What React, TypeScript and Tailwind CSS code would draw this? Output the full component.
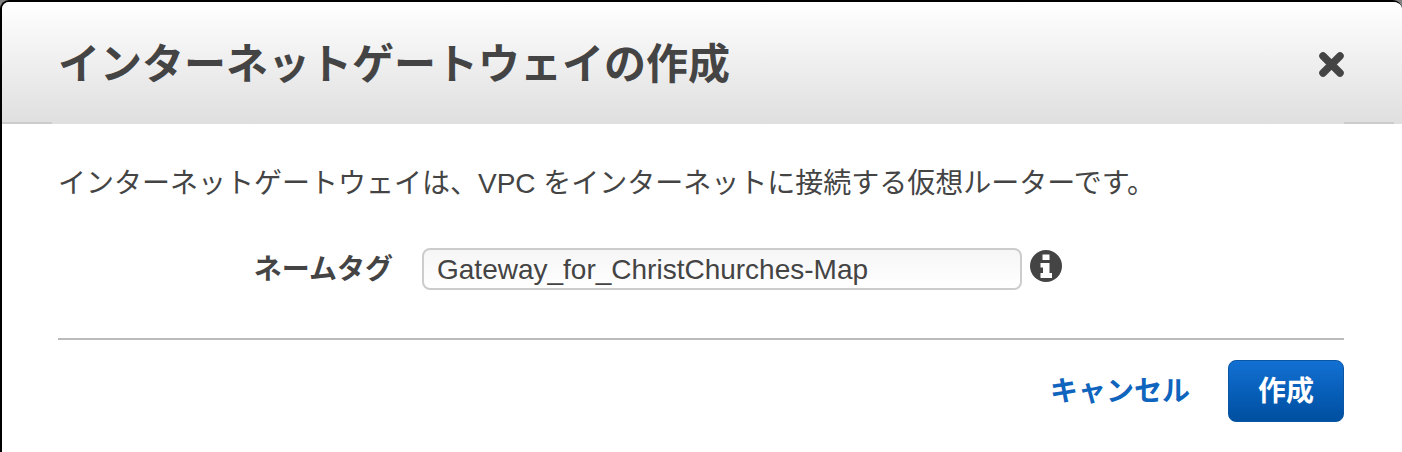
const jp = "font-['Liberation_Sans','Noto_Sans_CJK_JP',sans-serif]";

export default function App() {
  return (
    <div className={`w-[1402px] h-[452px] overflow-hidden bg-[#808080] ${jp}`}>
      <div className="h-full bg-white border-t-2 border-l-2 border-black rounded-tl-[9px] rounded-tr-[9px] overflow-hidden">
        {/* Header */}
        <div className="relative h-[122px] flex items-center justify-between pl-[56px] pr-[58px] bg-gradient-to-b from-white to-[#dfdfdf]">
          <h1 className="text-[42px] leading-[50px] font-bold text-[#444] mt-[4px]">
            インターネットゲートウェイの作成
          </h1>
          <svg viewBox="0 0 25 25" className="w-[25px] h-[25px] mt-[2px]">
            <path d="M4 4l17 17M21 4L4 21" stroke="#444" strokeWidth="7.5" strokeLinecap="round" fill="none" />
          </svg>
          <div className="absolute left-0 bottom-0 w-[50px] h-[2px] bg-[#ccc]" />
          <div className="absolute right-[8px] bottom-0 w-[50px] h-[2px] bg-[#ccc]" />
        </div>

        {/* Body */}
        <div className="pl-[56px] pr-[56px]">
          <p className="mt-[42px] text-[28px] leading-[36px] text-[#444]">
            インターネットゲートウェイは、VPC をインターネットに接続する仮想ルーターです。
          </p>
          <div className="mt-[46px] flex items-center">
            <label className="w-[335px] pt-[2px] text-right text-[28px] leading-[36px] font-bold text-[#444]">
              ネームタグ
            </label>
            <input
              readOnly
              value="Gateway_for_ChristChurches-Map"
              className="ml-[29px] w-[600px] h-[42px] pl-[13px] pr-[13px] pt-[2px] bg-gradient-to-b from-[#f6f6f6] to-white border-2 border-[#ccc] rounded-[8px] text-[28px] text-[#444] outline-none"
            />
            <svg viewBox="0 0 32 32" className="ml-[8px] mb-[6px] w-[32px] h-[32px]">
              <circle cx="16" cy="16" r="16" fill="#444" />
              <rect x="12.5" y="4.5" width="7" height="5.500" fill="#fff" />
              <path d="M10.500 13h9v10h2.500v5H10.500v-5h2.500v-5.500h-2.500z" fill="#fff" />
            </svg>
          </div>
          <div className="mt-[48px] h-[2px] bg-[#bbb] w-[1286px]" />
          <div className="mt-[20px] w-[1286px] flex items-center justify-end">
            <a className="pt-[2px] text-[28px] font-bold text-[#0f65bd] mr-[38px]">キャンセル</a>
            <button className="w-[116px] h-[62px] pt-[2px] rounded-[8px] border border-[#0a56a5] bg-gradient-to-b from-[#1270d3] to-[#004fa0] text-[28px] font-bold text-white">
              作成
            </button>
          </div>
        </div>
      </div>
    </div>
  );
}
